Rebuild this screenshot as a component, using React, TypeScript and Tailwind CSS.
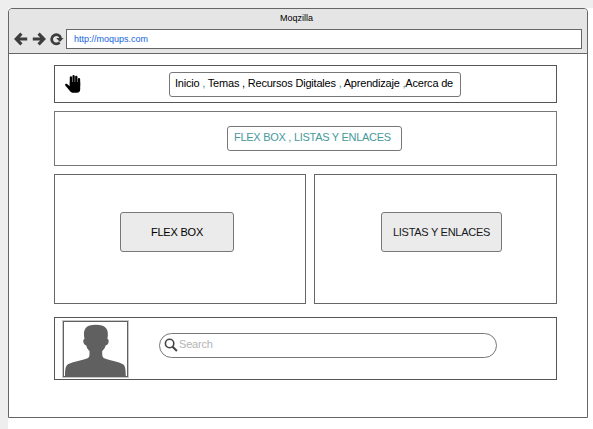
import React from 'react';

const Arrow = ({ flip = false }: { flip?: boolean }) => (
  <svg
    width="14"
    height="14"
    viewBox="0 0 14 14"
    className={flip ? 'rotate-180' : ''}
    fill="none"
    stroke="#3d3d3d"
    strokeWidth="3.1"
  >
    <path d="M7.4 1.6 2.2 7l5.2 5.4M2.4 7H13.2" />
  </svg>
);

const Reload = () => (
  <svg width="14" height="14" viewBox="0 0 14 14">
    <path d="M9.6 10.5A4.6 4.6 0 1 1 10.7 6" fill="none" stroke="#3d3d3d" strokeWidth="2.7" />
    <path d="M6.2 6.1H13.6L9.9 10Z" fill="#3d3d3d" />
  </svg>
);

const Hand = () => (
  <svg width="18" height="20" viewBox="0 0 18 20">
    <g stroke="#000" strokeWidth="2.3" strokeLinecap="round">
      <path d="M6.9 3.4V12M9.6 2.2V12M12.3 2.8V12M15 5.2V12" />
    </g>
    <path
      d="M5.8 8v4.3L3.4 10.2C2 9.1.5 10 1.3 11.4l4.4 5.4c1.1 1.4 2 2 3.6 2h3.6c2.2 0 3.3-1.5 3.3-3.6V8Z"
      fill="#000"
    />
  </svg>
);

const Avatar = () => (
  <svg width="61" height="52" viewBox="0 0 61 52" className="block">
    <path
      d="M0 52C.1 46 .3 42 3 40.3 7 37.8 19 36 23 34c1.7-1 1.5-3 1.5-7-1.8-1.8-2.8-3.2-3.2-5.5-1.8-.5-2.8-2-3-4-.1-1.4.3-2.4 1.2-2.6C17.5 5 21 .8 30.7.8S44.5 5 42.4 14.9c1 .2 1.4 1.2 1.2 2.8-.2 2-1.2 3.4-3 3.8-.6 2.4-1.6 4-3.4 5.5 0 4 0 6 1.5 7 4 2 15.8 3.8 19.3 6.3C60.5 42 60.6 46 60.8 52Z"
      fill="#606060"
    />
  </svg>
);

const SearchIcon = () => (
  <svg width="14" height="14" viewBox="0 0 14 14" fill="none" stroke="#444" className="-mt-px shrink-0">
    <circle cx="5.6" cy="5.5" r="4.2" strokeWidth="1.6" />
    <path d="m8.6 8.7 4.3 4.3" strokeWidth="2" />
  </svg>
);

export default function App() {
  return (
    <div className="h-[429px] w-[593px] overflow-hidden bg-[#eeeeee] pl-2 pt-2 font-['Liberation_Sans',Arial,sans-serif] text-black">
      <div className="h-[421px] bg-white">
        <div className="flex h-[410px] w-[580px] flex-col overflow-hidden rounded-t-[4px] border border-[#666] bg-white">
          <header className="h-[45px] shrink-0 border-b border-[#666] bg-[#e5e5e5]">
            <div className="h-5 pl-[271px] text-[9px] leading-[18px]">Moqzilla</div>
            <div className="flex items-center">
              <div className="flex w-[57px] shrink-0 items-center gap-1 pl-[5px]">
                <Arrow />
                <Arrow flip />
                <Reload />
              </div>
              <div className="h-5 w-[516px] border border-[#666] bg-white pl-[7px] text-[9px] leading-[18px] text-[#1464dc]">
                http://moqups.com
              </div>
            </div>
          </header>

          <main className="flex w-[548px] flex-col pl-[45px] pt-[11px]">
            <nav className="flex h-[38px] items-start border border-[#555] pl-[9px]">
              <div className="mt-[8px] w-[105px]">
                <Hand />
              </div>
              <div className="mt-[6px] h-[25px] w-[292px] whitespace-pre rounded-[3px] border border-[#777] pl-[5px] text-[11px] leading-[21px] tracking-[-0.205px]">
                Inicio <span className="text-[#397f91]">,</span> Temas , Recursos Digitales{' '}
                <span className="text-[#397f91]">,</span> Aprendizaje{' '}
                <span className="text-[#397f91]">,</span>Acerca de
              </div>
            </nav>

            <section className="mt-[8px] h-[55px] border border-[#777] pl-[172px] pt-[14px]">
              <div className="h-[25px] w-[175px] rounded-[3px] border border-[#777] pl-[6px] text-[11px] leading-[21px] tracking-[-0.28px] text-[#479a9b]">
                FLEX BOX , LISTAS Y ENLACES
              </div>
            </section>

            <section className="mt-2 flex h-[130px] gap-2">
              <div className="w-[252px] border border-[#666] pl-[65px] pt-[37px]">
                <button className="block h-10 w-[114px] rounded-[3px] border border-[#777] bg-[#ebebeb] text-[11px] tracking-[-0.2px]">
                  FLEX BOX
                </button>
              </div>
              <div className="w-[243px] border border-[#666] pl-[66px] pt-[37px]">
                <button className="block h-10 w-[121px] whitespace-nowrap rounded-[3px] border border-[#777] bg-[#ebebeb] text-[11px] tracking-[-0.28px] text-[#181820]">
                  LISTAS Y ENLACES
                </button>
              </div>
            </section>

            <footer className="mt-[13px] flex h-[63px] border border-[#555] pl-[8px]">
              <div className="mt-[3px] h-[56px] w-[65px] border border-[#606060] pl-px pt-[2px] outline outline-1 outline-[#c8c8c8]">
                <Avatar />
              </div>
              <div className="ml-[31px] mt-[15px] flex h-[25px] w-[338px] items-center rounded-full border border-[#777] pl-[4px]">
                <SearchIcon />
                <span className="-mt-[3px] ml-[1px] text-[11px] leading-[22px] tracking-[-0.2px] text-[#b4b4b4]">Search</span>
              </div>
            </footer>
          </main>
        </div>
      </div>
    </div>
  );
}
